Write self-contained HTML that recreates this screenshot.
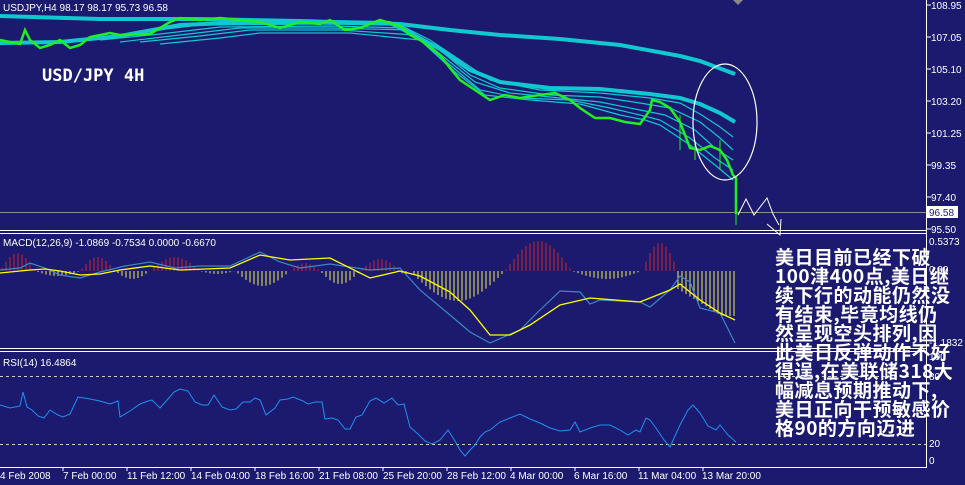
<!DOCTYPE html>
<html><head><meta charset="utf-8"><style>
body{margin:0;background:#1b1a6e;width:965px;height:485px;overflow:hidden;position:relative;font-family:"Liberation Sans","DejaVu Sans",sans-serif}
svg{position:absolute;left:0;top:0}
.t{position:absolute;left:775px;top:247px;color:#fff;font:bold 19px/19px "Noto Sans CJK SC","WenQuanYi Zen Hei",sans-serif;letter-spacing:0.5px;white-space:pre}
</style></head><body>
<svg id="s" width="965" height="485" font-family="Liberation Sans, DejaVu Sans, sans-serif" font-size="10" fill="#fff">
<g stroke="#fff" stroke-width="1" fill="none">
<line x1="926.5" y1="0" x2="926.5" y2="467"/>
<line x1="0" y1="230.5" x2="926" y2="230.5"/><line x1="0" y1="233.5" x2="926" y2="233.5"/>
<line x1="0" y1="348.5" x2="926" y2="348.5"/><line x1="0" y1="351.5" x2="926" y2="351.5"/>
<line x1="0" y1="467.5" x2="927" y2="467.5"/>
</g>
<g stroke="#fff"><line x1="927" y1="5" x2="931" y2="5"/><line x1="927" y1="37" x2="931" y2="37"/><line x1="927" y1="69" x2="931" y2="69"/><line x1="927" y1="101" x2="931" y2="101"/><line x1="927" y1="133" x2="931" y2="133"/><line x1="927" y1="165" x2="931" y2="165"/><line x1="927" y1="197" x2="931" y2="197"/><line x1="927" y1="229" x2="931" y2="229"/></g>
<g font-size="10" fill="#fff">
<text x="931" y="9">108.95</text><text x="931" y="41">107.05</text><text x="931" y="73">105.10</text><text x="931" y="105">103.20</text><text x="931" y="137">101.25</text><text x="931" y="169">99.35</text><text x="931" y="201">97.40</text><text x="931" y="233">95.50</text>
<text x="929" y="245">0.5373</text><text x="929" y="273">0.00</text><text x="929" y="346">-1.1832</text>
<text x="929" y="360">100</text><text x="929" y="380">80</text><text x="929" y="447">20</text><text x="929" y="464">0</text>
</g>
<polygon points="733,0 743,0 738,5" fill="#888"/>
<text x="3" y="11">USDJPY,H4  98.17 98.17 95.73 96.58</text>
<text x="42" y="81" font-family="DejaVu Sans Mono, Liberation Mono, monospace" font-weight="bold" font-size="17">USD/JPY 4H</text>
<line x1="0" y1="212.5" x2="926" y2="212.5" stroke="#8a9090"/>
<rect x="927" y="206" width="31" height="12" fill="#fff"/><text x="929" y="216" fill="#1b1a6e">96.58</text>
<g fill="none" stroke="#11c8d0">
<polyline stroke-width="4" points="0,16 100,19 200,19 300,21 400,24 450,30 500,35 560,39 620,45 680,56 700,61 735,74"/>
<polyline stroke-width="4" points="0,43 60,42 120,36 180,25 250,22 330,22 390,23 410,33 440,49 470,70 500,82 550,88 600,89 650,94 680,98 700,104 720,113 735,122"/>
<polyline stroke-width="1.2" points="80,40 140,32 200,25 320,24 400,25 430,40 460,60 490,80 540,90 600,93 650,98 680,103 700,114 720,127 733,137"/>
<polyline stroke-width="1.2" points="100,40 160,34 220,27 330,26 405,28 440,50 470,75 500,88 550,95 600,97 640,103 670,108 700,122 720,138 733,150"/>
<polyline stroke-width="1.2" points="120,42 180,35 240,28 330,28 410,30 445,58 475,82 510,93 560,98 600,102 640,110 665,115 695,130 715,148 733,160"/>
<polyline stroke-width="1.2" points="140,42 200,36 250,30 340,30 415,35 450,65 480,90 520,98 570,100 610,108 640,115 660,120 690,138 715,158 733,170"/>
<polyline stroke-width="1.2" points="160,44 220,38 260,33 350,33 420,40 455,72 485,95 530,100 580,104 620,115 645,120 660,125 690,145 715,165 733,180"/>
</g>
<g fill="none" stroke="#22ee22" stroke-width="2.5">
<polyline points="0,40 10,42 20,44 25,30 30,40 40,48 50,45 60,40 70,48 80,45 90,37 110,33 120,35 150,34 170,22 180,18 200,20 220,18 240,20 260,22 280,28 300,22 320,24 330,20 345,30 360,28 380,20 400,26 410,35 420,40 430,47 440,55 450,68 460,80 475,90 490,100 505,95 520,98 540,95 555,93 570,100 580,108 595,118 610,118 625,122 640,124 650,110 652,100 660,102 670,108 680,122 690,148 700,150 710,146 720,150 727,160 733,175 736,178 736,214"/>
</g>
<g stroke="#22ee22" stroke-width="1">
<line x1="736" y1="178" x2="736" y2="225"/><line x1="680" y1="115" x2="680" y2="150"/><line x1="695" y1="140" x2="695" y2="160"/><line x1="720" y1="140" x2="720" y2="170"/>
</g>
<ellipse cx="725" cy="122" rx="32" ry="58" fill="none" stroke="#fff" stroke-width="1.2"/>
<polyline points="738,215 746,199 754,215 767,198 773,214 779,225" fill="none" stroke="#fff"/>
<polyline points="767,224 780,235 781,219" fill="none" stroke="#fff"/>
<text x="3" y="246">MACD(12,26,9) -1.0869 -0.7534 0.0000 -0.6670</text>
<g id="hist"></g>
<polyline fill="none" stroke="#3a88c8" stroke-width="1.2" points="0,270 20,268 30,263 45,268 60,275 80,278 100,272 125,266 150,262 175,268 200,266 230,266 260,252 280,262 300,268 330,264 370,270 400,268 420,290 450,315 470,332 490,343 520,330 540,310 560,291 580,292 590,304 600,300 640,302 650,307 670,290 680,276 690,282 700,308 720,313 735,343"/>
<polyline fill="none" stroke="#ffff00" stroke-width="1.3" points="0,273 30,270 45,269 60,271 80,275 100,274 120,270 150,266 180,270 230,268 260,255 290,260 330,258 370,278 400,271 420,276 450,292 470,310 490,335 510,335 530,325 560,305 590,298 640,302 670,290 680,284 700,300 720,313 735,320"/>
<text x="3" y="366">RSI(14) 16.4864</text>
<line x1="0" y1="376.5" x2="926" y2="376.5" stroke="#ccc" stroke-dasharray="3,3"/>
<line x1="0" y1="444.5" x2="926" y2="444.5" stroke="#ccc" stroke-dasharray="3,3"/>
<polyline fill="none" stroke="#2090f0" points="0,405 10,408 20,406 23,392 27,407 32,410 38,416 44,418 50,410 58,415 63,417 70,414 78,397 90,399 100,401 110,404 118,401 120,417 130,411 140,404 148,401 152,400 160,408 168,399 174,392 180,389 188,391 195,402 202,405 208,405 214,395 222,407 230,410 236,409 243,402 250,402 255,398 260,400 266,415 275,408 280,400 288,399 293,397 303,401 308,404 315,402 322,402 325,419 332,418 338,420 345,429 350,429 356,417 362,415 370,401 376,398 384,403 392,398 398,405 404,404 410,427 418,434 425,441 432,444 440,440 448,430 455,441 460,450 465,456 470,450 475,445 480,437 485,432 490,430 500,422 510,418 520,414 530,419 540,423 550,428 560,431 570,430 575,422 580,432 590,428 600,425 610,425 620,430 628,435 636,430 640,432 646,418 650,420 656,428 664,440 670,447 680,425 688,410 693,405 700,413 708,426 716,430 720,425 728,435 736,442"/>
<g font-size="10" fill="#fff">
<text x="0" y="479">4 Feb 2008</text><text x="63" y="479">7 Feb 00:00</text><text x="127" y="479">11 Feb 12:00</text><text x="191" y="479">14 Feb 04:00</text><text x="255" y="479">18 Feb 16:00</text><text x="319" y="479">21 Feb 08:00</text><text x="383" y="479">25 Feb 20:00</text><text x="447" y="479">28 Feb 12:00</text><text x="510" y="479">4 Mar 00:00</text><text x="574" y="479">6 Mar 16:00</text><text x="638" y="479">11 Mar 04:00</text><text x="702" y="479">13 Mar 20:00</text>
</g>
<g stroke="#fff"><line x1="63" y1="467" x2="63" y2="471"/><line x1="127" y1="467" x2="127" y2="471"/><line x1="191" y1="467" x2="191" y2="471"/><line x1="255" y1="467" x2="255" y2="471"/><line x1="319" y1="467" x2="319" y2="471"/><line x1="383" y1="467" x2="383" y2="471"/><line x1="447" y1="467" x2="447" y2="471"/><line x1="511" y1="467" x2="511" y2="471"/><line x1="575" y1="467" x2="575" y2="471"/><line x1="639" y1="467" x2="639" y2="471"/><line x1="703" y1="467" x2="703" y2="471"/></g>
</svg>
<div class="t">美日目前已经下破
100津400点,美日继
续下行的动能仍然没
有结束,毕竟均线仍
然呈现空头排列,因
此美日反弹动作不好
得逞,在美联储318大
幅减息预期推动下,
美日正向干预敏感价
格90的方向迈进</div>
<script>
var segs=[[0,35,18],[35,80,-5],[80,115,14],[115,150,-8],[150,200,14],[200,235,-3],[235,290,-15],[290,320,8],[320,360,-13],[360,400,12],[400,410,-4],[410,505,-30],[505,572,30],[572,642,-8],[642,678,28],[678,736,-45]];
var g=document.getElementById('hist'),h='';
for(var x=2;x<736;x+=4){for(var i=0;i<segs.length;i++){var s=segs[i];if(x>=s[0]&&x<s[1]){var t=(x-s[0])/(s[1]-s[0]);var v=s[2]*Math.sin(Math.PI*t);if(i==segs.length-1)v=s[2]*Math.min(1,0.4+t*0.8);var y0=271,y1=271-v;h+='<line x1="'+x+'" x2="'+x+'" y1="'+y0+'" y2="'+y1+'" stroke="'+(v>0?'#d82020':'#f0f040')+'"/>';}}}
g.innerHTML=h;
</script>
</body></html>
